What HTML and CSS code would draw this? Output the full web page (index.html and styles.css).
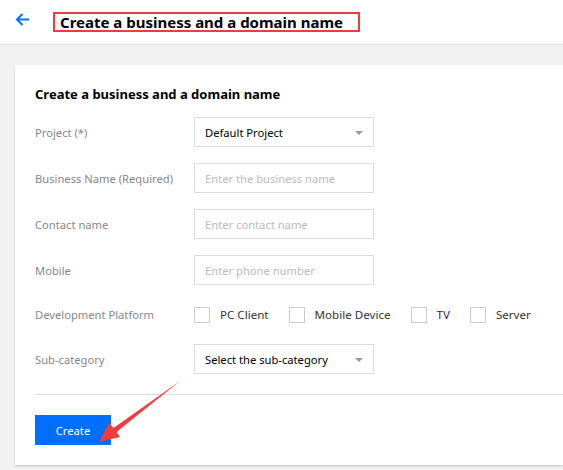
FILE: index.html
```html
<!DOCTYPE html>
<html lang="en">
<head>
    <meta charset="UTF-8">
    <meta name="viewport" content="width=device-width, initial-scale=1.0">
    <title>Create a business and a domain name</title>
    <link rel="stylesheet" href="styles.css">
</head>
<body>
    <header class="topbar">
        <a class="back-link" href="#">
            <svg width="14" height="13" viewBox="0 0 14 13" fill="none" stroke="#006eff" stroke-width="2">
                <path d="M14 6.5H2"/>
                <path d="M7.5 1L2 6.5L7.5 12"/>
            </svg>
        </a>
        <h1 class="page-title">Create a business and a domain name</h1>
    </header>

    <main class="content">
        <section class="card">
            <h2 class="card-title">Create a business and a domain name</h2>

            <div class="form-row">
                <label class="form-label">Project (*)</label>
                <div class="select-box">Default Project<span class="caret"></span></div>
            </div>
            <div class="form-row">
                <label class="form-label">Business Name (Required)</label>
                <input class="text-input" type="text" placeholder="Enter the business name">
            </div>
            <div class="form-row">
                <label class="form-label">Contact name</label>
                <input class="text-input" type="text" placeholder="Enter contact name">
            </div>
            <div class="form-row">
                <label class="form-label">Mobile</label>
                <input class="text-input" type="text" placeholder="Enter phone number">
            </div>
            <div class="form-row form-row-short">
                <label class="form-label">Development Platform</label>
                <div class="check-group">
                    <label class="check-item"><input type="checkbox">PC Client</label>
                    <label class="check-item"><input type="checkbox">Mobile Device</label>
                    <label class="check-item visited"><input type="checkbox">TV</label>
                    <label class="check-item"><input type="checkbox">Server</label>
                </div>
            </div>
            <div class="form-row">
                <label class="form-label">Sub-category</label>
                <div class="select-box">Select the sub-category<span class="caret"></span></div>
            </div>

            <div class="card-footer">
                <button class="btn-primary">Create</button>
            </div>
        </section>
    </main>

    <!-- annotation pointing at the Create button -->
    <svg class="annotation" width="563" height="470" viewBox="0 0 563 470">
        <polygon fill="#f23b3d" points="180,381 116.5,432 120,437 99,442 109,423 113.5,428"/>
    </svg>
</body>
</html>
```

FILE: styles.css
```css
body {
    margin: 0;
    font-family: "Noto Sans", "Open Sans", sans-serif;
    font-size: 11.2px;
    color: #333;
    background-color: #f2f2f2;
    position: relative;
    min-height: 470px;
}
.topbar {
    display: flex;
    align-items: center;
    height: 44px;
    padding-left: 15px;
    background-color: #fff;
    border-bottom: 1px solid #ddd;
}
.back-link {
    display: flex;
    width: 14px;
    margin-right: 24px;
    margin-top: -5px;
}
.page-title {
    margin: 0;
    padding: 0 15px 0 5px;
    border: 2px solid #ef3b3e;
    font-size: 15px;
    line-height: 16px;
    font-weight: bold;
    color: #000;
}
.content {
    padding: 20px 0 0 15px;
}
.card {
    background-color: #fff;
    padding: 20px 0 20px 20px;
    box-shadow: 0 1px 2px rgba(0, 0, 0, 0.2);
}
.card-title {
    margin: 0 0 14px;
    font-size: 13px;
    line-height: 18px;
    font-weight: bold;
    color: #000;
}
.form-row {
    display: flex;
    align-items: center;
    height: 30px;
    margin-bottom: 16px;
}
.form-row-short {
    height: 27px;
}
.form-label {
    width: 159px;
    color: #888;
}
.select-box,
.text-input {
    box-sizing: border-box;
    width: 180px;
    height: 30px;
    padding: 0 10px;
    border: 1px solid #ddd;
    font-family: inherit;
    font-size: 11.2px;
    color: #000;
}
.select-box {
    display: flex;
    align-items: center;
    position: relative;
}
.text-input::placeholder {
    color: #bbb;
}
.caret {
    position: absolute;
    right: 10px;
    top: 13px;
    border-left: 4px solid transparent;
    border-right: 4px solid transparent;
    border-top: 4px solid #999;
}
.check-group {
    display: flex;
    gap: 20px;
}
.check-item {
    display: flex;
    align-items: center;
    font-size: 11.6px;
    color: #333;
}
.check-item.visited {
    color: #4a1a5a;
}
.check-item input {
    appearance: none;
    width: 16px;
    height: 16px;
    margin: 0 10px 0 0;
    border: 1px solid #ccc;
    background: #fff;
}
.card-footer {
    margin-top: 20px;
    padding-top: 20px;
    border-top: 1px solid #ddd;
}
.btn-primary {
    display: block;
    width: 76px;
    height: 30px;
    border: none;
    background-color: #006eff;
    color: #fff;
    font-family: inherit;
    font-size: 11.2px;
}
.annotation {
    position: absolute;
    top: 0;
    left: 0;
    pointer-events: none;
}
```
